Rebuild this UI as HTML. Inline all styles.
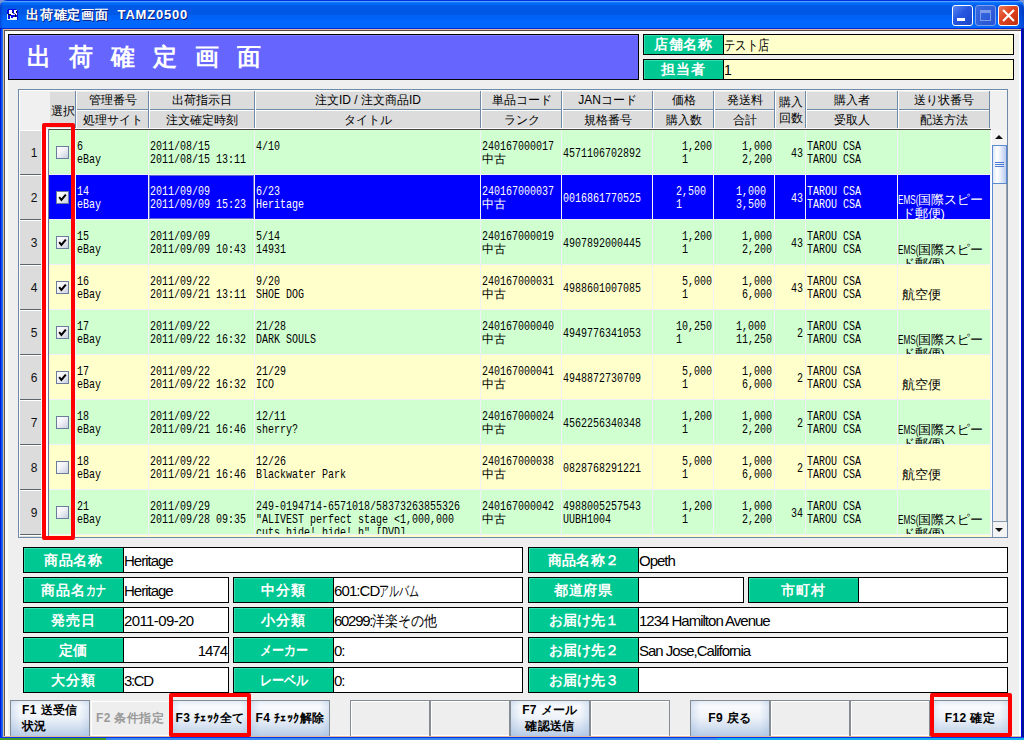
<!DOCTYPE html>
<html lang="ja"><head><meta charset="utf-8"><title>出荷確定画面 TAMZ0500</title>
<style>
html,body{margin:0;padding:0}
body{width:1024px;height:740px;overflow:hidden;position:relative;background:#efefef;font-family:"Liberation Sans",sans-serif;font-size:12px;color:#000}
div,span{box-sizing:border-box}
.a{position:absolute}
#tb{left:0;top:0;width:1024px;height:29px;border-radius:7px 7px 0 0;background:linear-gradient(to bottom,#0030e0 0,#0030e0 1px,#4aa0ff 1px,#4aa0ff 2px,#1478ff 2px,#1478ff 3px,#0068f8 3px,#0068f8 5px,#0059e6 5px,#0059e6 15px,#0060f4 15px,#0064fa 20px,#0068ff 21px,#0068ff 28px,#0028d8 28px)}
#tt{left:26px;top:7px;height:16px;line-height:16px;font-size:13px;font-weight:bold;color:#fff;letter-spacing:.8px;white-space:pre;text-shadow:1px 1px 0 #0a1a7a}
.wb{top:5px;width:21px;height:21px;border:1px solid #fff;border-radius:3px}
.m{position:absolute;font-family:"Liberation Mono",monospace;font-size:13px;line-height:13px;height:13px;white-space:pre;transform:scaleX(.7692);transform-origin:0 0}
.j{position:absolute;font-size:12px;line-height:13px;white-space:pre}
.h{position:absolute;font-size:12px;line-height:13px;text-align:center;white-space:nowrap;background:#dcdcdc}
.hv{position:absolute;width:1px;background:#6f8aa6;border:0}
.hw{position:absolute;width:1px;background:#fff}
.row{position:absolute;left:49px;width:941px;height:44px}
.rh{position:absolute;left:20px;width:21px;height:45px;background:#dcdcdc;border-top:1px solid #fff;border-bottom:1px solid #5c646c;text-align:center;line-height:44px;font-size:12px;padding-left:7px;color:#111}
.cb{position:absolute;left:56px;width:13px;height:13px;border:1px solid #6b7c9c;background:linear-gradient(135deg,#fff 0,#f4f4f8 40%,#c8cfdf 100%)}
.fld{position:absolute;height:26px;border:1px solid #000;background:#fff}
.lbl{position:absolute;left:0;top:0;height:24px;background:#00c892;border-right:1px solid #000;color:#fff;font-weight:bold;font-size:14px;letter-spacing:.8px;line-height:24px;text-align:center;white-space:nowrap;box-shadow:inset 1px 1px 0 #30e0b0}
.val{position:absolute;top:0;height:24px;line-height:25px;font-size:15px;white-space:pre;letter-spacing:-.6px}
.btn{position:absolute;top:700px;width:80px;height:36px;border:1px solid #868c94;border-bottom:0;font-weight:bold;font-size:12px;letter-spacing:.4px;line-height:16px;white-space:nowrap}
.on{background:linear-gradient(to right,rgba(150,182,222,.3) 0,rgba(150,182,222,0) 12%,rgba(150,182,222,0) 88%,rgba(150,182,222,.3) 100%),linear-gradient(to bottom,#e6edf6 0,#f8fafd 16%,#f0f4fa 45%,#d4e0f0 75%,#b8cce6 100%)}
.off{background:#eeeeee;box-shadow:inset 1px 1px 0 #fff,inset 0 -1px 0 #fff;color:#9a9a9a}
.red{position:absolute;border:4px solid #fe0000;border-radius:2px}
</style></head><body>

<div class="a" style="left:0;top:0;width:1024px;height:8px;background:#7b93d2"></div>
<div class="a" id="tb"></div>
<svg class="a" style="left:7px;top:9px" width="11" height="11" viewBox="0 0 11 11" shape-rendering="crispEdges"><rect x="0" y="0" width="11" height="11" fill="#0808e0"/><rect x="0" y="0" width="1" height="1" fill="#0a5ae8"/><rect x="9" y="0" width="2" height="1" fill="#0a5ae8"/><rect x="2" y="1" width="3" height="5" fill="#fff"/><rect x="7" y="1" width="3" height="4" fill="#fff"/><rect x="5" y="4" width="5" height="2" fill="#f4f4ff"/><rect x="5" y="3" width="1" height="1" fill="#111"/><rect x="9" y="2" width="1" height="2" fill="#111"/><rect x="1" y="5" width="3" height="1" fill="#111"/><rect x="8" y="5" width="1" height="3" fill="#111"/><rect x="6" y="4" width="2" height="1" fill="#4040e8"/><rect x="0" y="5" width="1" height="6" fill="#c8f4f4"/><rect x="3" y="7" width="1" height="3" fill="#f0fff8"/><rect x="6" y="8" width="4" height="2" fill="#f4fff4"/><rect x="1" y="10" width="9" height="1" fill="#d8fcf4"/><rect x="4" y="9" width="2" height="1" fill="#e8fff4"/></svg>
<div class="a" style="left:1016px;top:3px;width:8px;height:26px;background:linear-gradient(to right,rgba(0,20,150,0) 0,rgba(0,20,150,.45) 100%);border-radius:0 7px 0 0"></div>
<div class="a" style="left:0;top:3px;width:3px;height:26px;background:linear-gradient(to right,rgba(0,20,170,.4) 0,rgba(0,20,170,0) 100%)"></div>
<div class="a" id="tt">出荷確定画面  TAMZ0500</div>
<div class="a wb" style="left:952px;background:linear-gradient(135deg,#5a86f0 0,#2656e0 45%,#1c44c8 100%)"><div class="a" style="left:4px;top:12px;width:8px;height:3px;background:#fff"></div></div>
<div class="a wb" style="left:975px;border-color:#7f9fe8;background:linear-gradient(135deg,#3a6ae0 0,#2454d4 100%)"><div class="a" style="left:4px;top:4px;width:11px;height:11px;border:1px solid #7f9cea;border-top-width:3px"></div></div>
<div class="a wb" style="left:998px;background:linear-gradient(135deg,#ec7a58 0,#e04824 40%,#c22c0c 100%)"><svg class="a" style="left:3px;top:3px" width="13" height="13" viewBox="0 0 13 13"><path d="M1.8 1.8 L11.2 11.2 M11.2 1.8 L1.8 11.2" stroke="#fff" stroke-width="2.1" stroke-linecap="square"/></svg></div>
<div class="a" style="left:0;top:29px;width:1px;height:711px;background:#0019d8"></div><div class="a" style="left:1px;top:29px;width:1px;height:711px;background:#0a50f0"></div><div class="a" style="left:2px;top:29px;width:1px;height:711px;background:#1c6cf8"></div>
<div class="a" style="left:3px;top:29px;width:1px;height:707px;background:#dcb898"></div>
<div class="a" style="left:4px;top:30px;width:1px;height:706px;background:#5a5454"></div>
<div class="a" style="left:3px;top:29px;width:1018px;height:1px;background:#dcb898"></div>
<div class="a" style="left:4px;top:30px;width:1017px;height:1px;background:#504a4a"></div>
<div class="a" style="left:5px;top:31px;width:1016px;height:3px;background:#fbfaf9"></div>
<div class="a" style="left:5px;top:31px;width:3px;height:705px;background:#fbfaf9"></div>
<div class="a" style="left:1019px;top:31px;width:2px;height:705px;background:#fff"></div>
<div class="a" style="left:1021px;top:29px;width:1px;height:711px;background:#0000e8"></div><div class="a" style="left:1022px;top:29px;width:2px;height:711px;background:#001296"></div>
<div class="a" style="left:5px;top:735px;width:1016px;height:1px;background:#fbfaf9"></div>
<div class="a" style="left:3px;top:736px;width:1018px;height:1px;background:#dcb898"></div>
<div class="a" style="left:0;top:737px;width:1024px;height:1px;background:#0a34ec"></div>
<div class="a" style="left:0;top:738px;width:106px;height:2px;background:#3e9a2a"></div>
<div class="a" style="left:106px;top:738px;width:611px;height:2px;background:#3a8af0"></div>
<div class="a" style="left:717px;top:738px;width:307px;height:2px;background:#14b0ee"></div>
<div class="a" style="left:8px;top:34px;width:631px;height:46px;border:1px solid #000;background:#6666fe;box-shadow:inset 0 1px 0 #8080ff"></div>
<div class="a" style="left:27px;top:42px;height:30px;line-height:30px;font-size:24px;font-weight:bold;color:#fff;letter-spacing:18px;white-space:nowrap">出荷確定画面</div>
<div class="a" style="left:643px;top:34px;width:371px;height:21px;border:1px solid #000;background:#ffffcc"><div class="lbl" style="width:80px;height:19px;line-height:19px">店舗名称</div><div class="val" style="left:80px;height:19px;line-height:20px;font-size:14px;letter-spacing:0"><span style="display:inline-block;letter-spacing:0;transform:scaleX(0.804);transform-origin:0 50%;margin-right:-11.0px">テスト店</span></div></div>
<div class="a" style="left:643px;top:59px;width:371px;height:21px;border:1px solid #000;background:#ffffcc"><div class="lbl" style="width:80px;height:19px;line-height:19px">担当者</div><div class="val" style="left:80px;height:19px;line-height:20px;font-size:14px;letter-spacing:0">1</div></div>
<div class="a" style="left:18px;top:89px;width:990px;height:449px;border:1px solid #6f8aa6;background:#f0f0f0;box-shadow:inset 1px 1px 0 #fff"></div>
<div class="h" style="left:50px;top:92px;width:25px;height:36px;line-height:33px;padding-top:3px;letter-spacing:-.5px">選択</div>
<div class="h" style="left:77px;top:92px;width:71px;height:17px;line-height:17px">管理番号</div>
<div class="h" style="left:77px;top:111px;width:71px;height:17px;line-height:19px;overflow:hidden">処理サイト</div>
<div class="a" style="left:76px;top:109px;width:72px;height:1px;background:#6f8aa6"></div><div class="a" style="left:77px;top:110px;width:71px;height:1px;background:#fff"></div>
<div class="h" style="left:150px;top:92px;width:104px;height:17px;line-height:17px">出荷指示日</div>
<div class="h" style="left:150px;top:111px;width:104px;height:17px;line-height:19px;overflow:hidden">注文確定時刻</div>
<div class="a" style="left:149px;top:109px;width:105px;height:1px;background:#6f8aa6"></div><div class="a" style="left:150px;top:110px;width:104px;height:1px;background:#fff"></div>
<div class="h" style="left:256px;top:92px;width:224px;height:17px;line-height:17px">注文ID / 注文商品ID</div>
<div class="h" style="left:256px;top:111px;width:224px;height:17px;line-height:19px;overflow:hidden">タイトル</div>
<div class="a" style="left:255px;top:109px;width:225px;height:1px;background:#6f8aa6"></div><div class="a" style="left:256px;top:110px;width:224px;height:1px;background:#fff"></div>
<div class="h" style="left:482px;top:92px;width:79px;height:17px;line-height:17px">単品コード</div>
<div class="h" style="left:482px;top:111px;width:79px;height:17px;line-height:19px;overflow:hidden">ランク</div>
<div class="a" style="left:481px;top:109px;width:80px;height:1px;background:#6f8aa6"></div><div class="a" style="left:482px;top:110px;width:79px;height:1px;background:#fff"></div>
<div class="h" style="left:563px;top:92px;width:89px;height:17px;line-height:17px">JANコード</div>
<div class="h" style="left:563px;top:111px;width:89px;height:17px;line-height:19px;overflow:hidden">規格番号</div>
<div class="a" style="left:562px;top:109px;width:90px;height:1px;background:#6f8aa6"></div><div class="a" style="left:563px;top:110px;width:89px;height:1px;background:#fff"></div>
<div class="h" style="left:654px;top:92px;width:59px;height:17px;line-height:17px">価格</div>
<div class="h" style="left:654px;top:111px;width:59px;height:17px;line-height:19px;overflow:hidden">購入数</div>
<div class="a" style="left:653px;top:109px;width:60px;height:1px;background:#6f8aa6"></div><div class="a" style="left:654px;top:110px;width:59px;height:1px;background:#fff"></div>
<div class="h" style="left:715px;top:92px;width:59px;height:17px;line-height:17px">発送料</div>
<div class="h" style="left:715px;top:111px;width:59px;height:17px;line-height:19px;overflow:hidden">合計</div>
<div class="a" style="left:714px;top:109px;width:60px;height:1px;background:#6f8aa6"></div><div class="a" style="left:715px;top:110px;width:59px;height:1px;background:#fff"></div>
<div class="h" style="left:806px;top:92px;width:91px;height:17px;line-height:17px">購入者</div>
<div class="h" style="left:806px;top:111px;width:91px;height:17px;line-height:19px;overflow:hidden">受取人</div>
<div class="a" style="left:805px;top:109px;width:92px;height:1px;background:#6f8aa6"></div><div class="a" style="left:806px;top:110px;width:91px;height:1px;background:#fff"></div>
<div class="h" style="left:899px;top:92px;width:90px;height:17px;line-height:17px">送り状番号</div>
<div class="h" style="left:899px;top:111px;width:90px;height:17px;line-height:19px;overflow:hidden">配送方法</div>
<div class="a" style="left:898px;top:109px;width:91px;height:1px;background:#6f8aa6"></div><div class="a" style="left:899px;top:110px;width:90px;height:1px;background:#fff"></div>
<div class="h" style="left:776px;top:92px;width:29px;height:36px;line-height:16px;padding-top:2px;white-space:normal">購入<br>回数</div>
<div class="hv" style="left:75px;top:91px;height:38px"></div>
<div class="hw" style="left:76px;top:91px;height:37px"></div>
<div class="hv" style="left:148px;top:91px;height:38px"></div>
<div class="hw" style="left:149px;top:91px;height:37px"></div>
<div class="hv" style="left:254px;top:91px;height:38px"></div>
<div class="hw" style="left:255px;top:91px;height:37px"></div>
<div class="hv" style="left:480px;top:91px;height:38px"></div>
<div class="hw" style="left:481px;top:91px;height:37px"></div>
<div class="hv" style="left:561px;top:91px;height:38px"></div>
<div class="hw" style="left:562px;top:91px;height:37px"></div>
<div class="hv" style="left:652px;top:91px;height:38px"></div>
<div class="hw" style="left:653px;top:91px;height:37px"></div>
<div class="hv" style="left:713px;top:91px;height:38px"></div>
<div class="hw" style="left:714px;top:91px;height:37px"></div>
<div class="hv" style="left:774px;top:91px;height:38px"></div>
<div class="hw" style="left:775px;top:91px;height:37px"></div>
<div class="hv" style="left:805px;top:91px;height:38px"></div>
<div class="hw" style="left:806px;top:91px;height:37px"></div>
<div class="hv" style="left:897px;top:91px;height:38px"></div>
<div class="hw" style="left:898px;top:91px;height:37px"></div>
<div class="hv" style="left:989px;top:91px;height:38px"></div>
<div class="a" style="left:51px;top:128px;width:939px;height:1px;background:#fafafa"></div>
<div class="a" style="left:48px;top:129px;width:943px;height:1px;background:#4a4444"></div>
<div class="a" style="left:48px;top:129px;width:1px;height:408px;background:#6a78a0"></div>
<div class="a" style="left:46px;top:130px;width:2px;height:407px;background:#fff"></div>
<div class="a" style="left:41px;top:130px;width:1px;height:407px;background:#e8fcfc"></div>
<div class="a" style="left:49px;top:130px;width:942px;height:407px;background:#f1f2f7"></div>
<div class="rh" style="top:130px">1</div>
<div class="a" style="left:49px;top:130px;width:26px;height:44px;background:#d0ffd0"></div>
<div class="a" style="left:76px;top:130px;width:72px;height:44px;background:#d0ffd0"></div>
<div class="a" style="left:149px;top:130px;width:105px;height:44px;background:#d0ffd0"></div>
<div class="a" style="left:255px;top:130px;width:225px;height:44px;background:#d0ffd0"></div>
<div class="a" style="left:481px;top:130px;width:80px;height:44px;background:#d0ffd0"></div>
<div class="a" style="left:562px;top:130px;width:90px;height:44px;background:#d0ffd0"></div>
<div class="a" style="left:653px;top:130px;width:60px;height:44px;background:#d0ffd0"></div>
<div class="a" style="left:714px;top:130px;width:60px;height:44px;background:#d0ffd0"></div>
<div class="a" style="left:775px;top:130px;width:30px;height:44px;background:#d0ffd0"></div>
<div class="a" style="left:806px;top:130px;width:91px;height:44px;background:#d0ffd0"></div>
<div class="a" style="left:898px;top:130px;width:92px;height:44px;background:#d0ffd0"></div>
<div class="cb" style="top:146px"></div>
<div class="m" style="left:77px;top:140px;color:#000">6</div>
<div class="m" style="left:77px;top:153px;color:#000">eBay</div>
<div class="m" style="left:150px;top:140px;color:#000">2011/08/15</div>
<div class="m" style="left:150px;top:153px;color:#000">2011/08/15 13:11</div>
<div class="m" style="left:256px;top:140px;color:#000">4/10</div>
<div class="m" style="left:482px;top:140px;color:#000">240167000017</div>
<div class="j" style="left:482px;top:153px;color:#000">中古</div>
<div class="m" style="left:563px;top:147px;color:#000">4571106702892</div>
<div class="m" style="left:682px;top:140px;color:#000">1,200</div>
<div class="m" style="left:682px;top:153px;color:#000">1</div>
<div class="m" style="left:742px;top:140px;color:#000">1,000</div>
<div class="m" style="left:742px;top:153px;color:#000">2,200</div>
<div class="m" style="left:791px;top:147px;color:#000">43</div>
<div class="m" style="left:807px;top:140px;color:#000">TAROU CSA</div>
<div class="m" style="left:807px;top:153px;color:#000">TAROU CSA</div>
<div class="rh" style="top:175px">2</div>
<div class="a" style="left:49px;top:175px;width:26px;height:44px;background:#0000fe"></div>
<div class="a" style="left:76px;top:175px;width:72px;height:44px;background:#0000fe"></div>
<div class="a" style="left:149px;top:175px;width:105px;height:44px;background:#0000fe"></div>
<div class="a" style="left:255px;top:175px;width:225px;height:44px;background:#0000fe"></div>
<div class="a" style="left:481px;top:175px;width:80px;height:44px;background:#0000fe"></div>
<div class="a" style="left:562px;top:175px;width:90px;height:44px;background:#0000fe"></div>
<div class="a" style="left:653px;top:175px;width:60px;height:44px;background:#0000fe"></div>
<div class="a" style="left:714px;top:175px;width:60px;height:44px;background:#0000fe"></div>
<div class="a" style="left:775px;top:175px;width:30px;height:44px;background:#0000fe"></div>
<div class="a" style="left:806px;top:175px;width:91px;height:44px;background:#0000fe"></div>
<div class="a" style="left:898px;top:175px;width:92px;height:44px;background:#0000fe"></div>
<div class="cb" style="top:191px"><svg class="a" style="left:1px;top:1px" width="9" height="9" viewBox="0 0 9 9"><path d="M1.2 4.2 L3.4 7 L7.8 1.6" stroke="#000" stroke-width="2" fill="none"/></svg></div>
<div class="m" style="left:77px;top:185px;color:#fff">14</div>
<div class="m" style="left:77px;top:198px;color:#fff">eBay</div>
<div class="m" style="left:150px;top:185px;color:#fff">2011/09/09</div>
<div class="m" style="left:150px;top:198px;color:#fff">2011/09/09 15:23</div>
<div class="m" style="left:256px;top:185px;color:#fff">6/23</div>
<div class="m" style="left:256px;top:198px;color:#fff">Heritage</div>
<div class="m" style="left:482px;top:185px;color:#fff">240167000037</div>
<div class="j" style="left:482px;top:198px;color:#fff">中古</div>
<div class="m" style="left:563px;top:192px;color:#fff">0016861770525</div>
<div class="m" style="left:676px;top:185px;color:#fff">2,500</div>
<div class="m" style="left:676px;top:198px;color:#fff">1</div>
<div class="m" style="left:736px;top:185px;color:#fff">1,000</div>
<div class="m" style="left:736px;top:198px;color:#fff">3,500</div>
<div class="m" style="left:791px;top:192px;color:#fff">43</div>
<div class="m" style="left:807px;top:185px;color:#fff">TAROU CSA</div>
<div class="m" style="left:807px;top:198px;color:#fff">TAROU CSA</div>
<div class="a" style="left:898px;top:193px;width:92px;height:26px;overflow:hidden"><div class="j" style="left:0;top:0;font-size:13px;color:#fff"><span style="display:inline-block;font-size:12px;transform:scaleX(.68);transform-origin:0 50%;margin-right:-9.6px">EMS(</span>国際スピー<br>&nbsp;ド郵便)</div></div>
<div class="rh" style="top:220px">3</div>
<div class="a" style="left:49px;top:220px;width:26px;height:44px;background:#d0ffd0"></div>
<div class="a" style="left:76px;top:220px;width:72px;height:44px;background:#d0ffd0"></div>
<div class="a" style="left:149px;top:220px;width:105px;height:44px;background:#d0ffd0"></div>
<div class="a" style="left:255px;top:220px;width:225px;height:44px;background:#d0ffd0"></div>
<div class="a" style="left:481px;top:220px;width:80px;height:44px;background:#d0ffd0"></div>
<div class="a" style="left:562px;top:220px;width:90px;height:44px;background:#d0ffd0"></div>
<div class="a" style="left:653px;top:220px;width:60px;height:44px;background:#d0ffd0"></div>
<div class="a" style="left:714px;top:220px;width:60px;height:44px;background:#d0ffd0"></div>
<div class="a" style="left:775px;top:220px;width:30px;height:44px;background:#d0ffd0"></div>
<div class="a" style="left:806px;top:220px;width:91px;height:44px;background:#d0ffd0"></div>
<div class="a" style="left:898px;top:220px;width:92px;height:44px;background:#d0ffd0"></div>
<div class="cb" style="top:236px"><svg class="a" style="left:1px;top:1px" width="9" height="9" viewBox="0 0 9 9"><path d="M1.2 4.2 L3.4 7 L7.8 1.6" stroke="#000" stroke-width="2" fill="none"/></svg></div>
<div class="m" style="left:77px;top:230px;color:#000">15</div>
<div class="m" style="left:77px;top:243px;color:#000">eBay</div>
<div class="m" style="left:150px;top:230px;color:#000">2011/09/09</div>
<div class="m" style="left:150px;top:243px;color:#000">2011/09/09 10:43</div>
<div class="m" style="left:256px;top:230px;color:#000">5/14</div>
<div class="m" style="left:256px;top:243px;color:#000">14931</div>
<div class="m" style="left:482px;top:230px;color:#000">240167000019</div>
<div class="j" style="left:482px;top:243px;color:#000">中古</div>
<div class="m" style="left:563px;top:237px;color:#000">4907892000445</div>
<div class="m" style="left:682px;top:230px;color:#000">1,200</div>
<div class="m" style="left:682px;top:243px;color:#000">1</div>
<div class="m" style="left:742px;top:230px;color:#000">1,000</div>
<div class="m" style="left:742px;top:243px;color:#000">2,200</div>
<div class="m" style="left:791px;top:237px;color:#000">43</div>
<div class="m" style="left:807px;top:230px;color:#000">TAROU CSA</div>
<div class="m" style="left:807px;top:243px;color:#000">TAROU CSA</div>
<div class="a" style="left:898px;top:243px;width:92px;height:21px;overflow:hidden"><div class="j" style="left:0;top:0;font-size:13px;color:#000"><span style="display:inline-block;font-size:12px;transform:scaleX(.68);transform-origin:0 50%;margin-right:-9.6px">EMS(</span>国際スピー<br>&nbsp;ド郵便)</div></div>
<div class="rh" style="top:265px">4</div>
<div class="a" style="left:49px;top:265px;width:26px;height:44px;background:#ffffcc"></div>
<div class="a" style="left:76px;top:265px;width:72px;height:44px;background:#ffffcc"></div>
<div class="a" style="left:149px;top:265px;width:105px;height:44px;background:#ffffcc"></div>
<div class="a" style="left:255px;top:265px;width:225px;height:44px;background:#ffffcc"></div>
<div class="a" style="left:481px;top:265px;width:80px;height:44px;background:#ffffcc"></div>
<div class="a" style="left:562px;top:265px;width:90px;height:44px;background:#ffffcc"></div>
<div class="a" style="left:653px;top:265px;width:60px;height:44px;background:#ffffcc"></div>
<div class="a" style="left:714px;top:265px;width:60px;height:44px;background:#ffffcc"></div>
<div class="a" style="left:775px;top:265px;width:30px;height:44px;background:#ffffcc"></div>
<div class="a" style="left:806px;top:265px;width:91px;height:44px;background:#ffffcc"></div>
<div class="a" style="left:898px;top:265px;width:92px;height:44px;background:#ffffcc"></div>
<div class="cb" style="top:281px"><svg class="a" style="left:1px;top:1px" width="9" height="9" viewBox="0 0 9 9"><path d="M1.2 4.2 L3.4 7 L7.8 1.6" stroke="#000" stroke-width="2" fill="none"/></svg></div>
<div class="m" style="left:77px;top:275px;color:#000">16</div>
<div class="m" style="left:77px;top:288px;color:#000">eBay</div>
<div class="m" style="left:150px;top:275px;color:#000">2011/09/22</div>
<div class="m" style="left:150px;top:288px;color:#000">2011/09/21 13:11</div>
<div class="m" style="left:256px;top:275px;color:#000">9/20</div>
<div class="m" style="left:256px;top:288px;color:#000">SHOE DOG</div>
<div class="m" style="left:482px;top:275px;color:#000">240167000031</div>
<div class="j" style="left:482px;top:288px;color:#000">中古</div>
<div class="m" style="left:563px;top:282px;color:#000">4988601007085</div>
<div class="m" style="left:682px;top:275px;color:#000">5,000</div>
<div class="m" style="left:682px;top:288px;color:#000">1</div>
<div class="m" style="left:742px;top:275px;color:#000">1,000</div>
<div class="m" style="left:742px;top:288px;color:#000">6,000</div>
<div class="m" style="left:791px;top:282px;color:#000">43</div>
<div class="m" style="left:807px;top:275px;color:#000">TAROU CSA</div>
<div class="m" style="left:807px;top:288px;color:#000">TAROU CSA</div>
<div class="j" style="left:902px;top:288px;font-size:13px;color:#000">航空便</div>
<div class="rh" style="top:310px">5</div>
<div class="a" style="left:49px;top:310px;width:26px;height:44px;background:#d0ffd0"></div>
<div class="a" style="left:76px;top:310px;width:72px;height:44px;background:#d0ffd0"></div>
<div class="a" style="left:149px;top:310px;width:105px;height:44px;background:#d0ffd0"></div>
<div class="a" style="left:255px;top:310px;width:225px;height:44px;background:#d0ffd0"></div>
<div class="a" style="left:481px;top:310px;width:80px;height:44px;background:#d0ffd0"></div>
<div class="a" style="left:562px;top:310px;width:90px;height:44px;background:#d0ffd0"></div>
<div class="a" style="left:653px;top:310px;width:60px;height:44px;background:#d0ffd0"></div>
<div class="a" style="left:714px;top:310px;width:60px;height:44px;background:#d0ffd0"></div>
<div class="a" style="left:775px;top:310px;width:30px;height:44px;background:#d0ffd0"></div>
<div class="a" style="left:806px;top:310px;width:91px;height:44px;background:#d0ffd0"></div>
<div class="a" style="left:898px;top:310px;width:92px;height:44px;background:#d0ffd0"></div>
<div class="cb" style="top:326px"><svg class="a" style="left:1px;top:1px" width="9" height="9" viewBox="0 0 9 9"><path d="M1.2 4.2 L3.4 7 L7.8 1.6" stroke="#000" stroke-width="2" fill="none"/></svg></div>
<div class="m" style="left:77px;top:320px;color:#000">17</div>
<div class="m" style="left:77px;top:333px;color:#000">eBay</div>
<div class="m" style="left:150px;top:320px;color:#000">2011/09/22</div>
<div class="m" style="left:150px;top:333px;color:#000">2011/09/22 16:32</div>
<div class="m" style="left:256px;top:320px;color:#000">21/28</div>
<div class="m" style="left:256px;top:333px;color:#000">DARK SOULS</div>
<div class="m" style="left:482px;top:320px;color:#000">240167000040</div>
<div class="j" style="left:482px;top:333px;color:#000">中古</div>
<div class="m" style="left:563px;top:327px;color:#000">4949776341053</div>
<div class="m" style="left:676px;top:320px;color:#000">10,250</div>
<div class="m" style="left:676px;top:333px;color:#000">1</div>
<div class="m" style="left:736px;top:320px;color:#000">1,000</div>
<div class="m" style="left:736px;top:333px;color:#000">11,250</div>
<div class="m" style="left:797px;top:327px;color:#000">2</div>
<div class="m" style="left:807px;top:320px;color:#000">TAROU CSA</div>
<div class="m" style="left:807px;top:333px;color:#000">TAROU CSA</div>
<div class="a" style="left:898px;top:333px;width:92px;height:21px;overflow:hidden"><div class="j" style="left:0;top:0;font-size:13px;color:#000"><span style="display:inline-block;font-size:12px;transform:scaleX(.68);transform-origin:0 50%;margin-right:-9.6px">EMS(</span>国際スピー<br>&nbsp;ド郵便)</div></div>
<div class="rh" style="top:355px">6</div>
<div class="a" style="left:49px;top:355px;width:26px;height:44px;background:#ffffcc"></div>
<div class="a" style="left:76px;top:355px;width:72px;height:44px;background:#ffffcc"></div>
<div class="a" style="left:149px;top:355px;width:105px;height:44px;background:#ffffcc"></div>
<div class="a" style="left:255px;top:355px;width:225px;height:44px;background:#ffffcc"></div>
<div class="a" style="left:481px;top:355px;width:80px;height:44px;background:#ffffcc"></div>
<div class="a" style="left:562px;top:355px;width:90px;height:44px;background:#ffffcc"></div>
<div class="a" style="left:653px;top:355px;width:60px;height:44px;background:#ffffcc"></div>
<div class="a" style="left:714px;top:355px;width:60px;height:44px;background:#ffffcc"></div>
<div class="a" style="left:775px;top:355px;width:30px;height:44px;background:#ffffcc"></div>
<div class="a" style="left:806px;top:355px;width:91px;height:44px;background:#ffffcc"></div>
<div class="a" style="left:898px;top:355px;width:92px;height:44px;background:#ffffcc"></div>
<div class="cb" style="top:371px"><svg class="a" style="left:1px;top:1px" width="9" height="9" viewBox="0 0 9 9"><path d="M1.2 4.2 L3.4 7 L7.8 1.6" stroke="#000" stroke-width="2" fill="none"/></svg></div>
<div class="m" style="left:77px;top:365px;color:#000">17</div>
<div class="m" style="left:77px;top:378px;color:#000">eBay</div>
<div class="m" style="left:150px;top:365px;color:#000">2011/09/22</div>
<div class="m" style="left:150px;top:378px;color:#000">2011/09/22 16:32</div>
<div class="m" style="left:256px;top:365px;color:#000">21/29</div>
<div class="m" style="left:256px;top:378px;color:#000">ICO</div>
<div class="m" style="left:482px;top:365px;color:#000">240167000041</div>
<div class="j" style="left:482px;top:378px;color:#000">中古</div>
<div class="m" style="left:563px;top:372px;color:#000">4948872730709</div>
<div class="m" style="left:682px;top:365px;color:#000">5,000</div>
<div class="m" style="left:682px;top:378px;color:#000">1</div>
<div class="m" style="left:742px;top:365px;color:#000">1,000</div>
<div class="m" style="left:742px;top:378px;color:#000">6,000</div>
<div class="m" style="left:797px;top:372px;color:#000">2</div>
<div class="m" style="left:807px;top:365px;color:#000">TAROU CSA</div>
<div class="m" style="left:807px;top:378px;color:#000">TAROU CSA</div>
<div class="j" style="left:902px;top:378px;font-size:13px;color:#000">航空便</div>
<div class="rh" style="top:400px">7</div>
<div class="a" style="left:49px;top:400px;width:26px;height:44px;background:#d0ffd0"></div>
<div class="a" style="left:76px;top:400px;width:72px;height:44px;background:#d0ffd0"></div>
<div class="a" style="left:149px;top:400px;width:105px;height:44px;background:#d0ffd0"></div>
<div class="a" style="left:255px;top:400px;width:225px;height:44px;background:#d0ffd0"></div>
<div class="a" style="left:481px;top:400px;width:80px;height:44px;background:#d0ffd0"></div>
<div class="a" style="left:562px;top:400px;width:90px;height:44px;background:#d0ffd0"></div>
<div class="a" style="left:653px;top:400px;width:60px;height:44px;background:#d0ffd0"></div>
<div class="a" style="left:714px;top:400px;width:60px;height:44px;background:#d0ffd0"></div>
<div class="a" style="left:775px;top:400px;width:30px;height:44px;background:#d0ffd0"></div>
<div class="a" style="left:806px;top:400px;width:91px;height:44px;background:#d0ffd0"></div>
<div class="a" style="left:898px;top:400px;width:92px;height:44px;background:#d0ffd0"></div>
<div class="cb" style="top:416px"></div>
<div class="m" style="left:77px;top:410px;color:#000">18</div>
<div class="m" style="left:77px;top:423px;color:#000">eBay</div>
<div class="m" style="left:150px;top:410px;color:#000">2011/09/22</div>
<div class="m" style="left:150px;top:423px;color:#000">2011/09/21 16:46</div>
<div class="m" style="left:256px;top:410px;color:#000">12/11</div>
<div class="m" style="left:256px;top:423px;color:#000">sherry?</div>
<div class="m" style="left:482px;top:410px;color:#000">240167000024</div>
<div class="j" style="left:482px;top:423px;color:#000">中古</div>
<div class="m" style="left:563px;top:417px;color:#000">4562256340348</div>
<div class="m" style="left:682px;top:410px;color:#000">1,200</div>
<div class="m" style="left:682px;top:423px;color:#000">1</div>
<div class="m" style="left:742px;top:410px;color:#000">1,000</div>
<div class="m" style="left:742px;top:423px;color:#000">2,200</div>
<div class="m" style="left:797px;top:417px;color:#000">2</div>
<div class="m" style="left:807px;top:410px;color:#000">TAROU CSA</div>
<div class="m" style="left:807px;top:423px;color:#000">TAROU CSA</div>
<div class="a" style="left:898px;top:423px;width:92px;height:21px;overflow:hidden"><div class="j" style="left:0;top:0;font-size:13px;color:#000"><span style="display:inline-block;font-size:12px;transform:scaleX(.68);transform-origin:0 50%;margin-right:-9.6px">EMS(</span>国際スピー<br>&nbsp;ド郵便)</div></div>
<div class="rh" style="top:445px">8</div>
<div class="a" style="left:49px;top:445px;width:26px;height:44px;background:#ffffcc"></div>
<div class="a" style="left:76px;top:445px;width:72px;height:44px;background:#ffffcc"></div>
<div class="a" style="left:149px;top:445px;width:105px;height:44px;background:#ffffcc"></div>
<div class="a" style="left:255px;top:445px;width:225px;height:44px;background:#ffffcc"></div>
<div class="a" style="left:481px;top:445px;width:80px;height:44px;background:#ffffcc"></div>
<div class="a" style="left:562px;top:445px;width:90px;height:44px;background:#ffffcc"></div>
<div class="a" style="left:653px;top:445px;width:60px;height:44px;background:#ffffcc"></div>
<div class="a" style="left:714px;top:445px;width:60px;height:44px;background:#ffffcc"></div>
<div class="a" style="left:775px;top:445px;width:30px;height:44px;background:#ffffcc"></div>
<div class="a" style="left:806px;top:445px;width:91px;height:44px;background:#ffffcc"></div>
<div class="a" style="left:898px;top:445px;width:92px;height:44px;background:#ffffcc"></div>
<div class="cb" style="top:461px"></div>
<div class="m" style="left:77px;top:455px;color:#000">18</div>
<div class="m" style="left:77px;top:468px;color:#000">eBay</div>
<div class="m" style="left:150px;top:455px;color:#000">2011/09/22</div>
<div class="m" style="left:150px;top:468px;color:#000">2011/09/21 16:46</div>
<div class="m" style="left:256px;top:455px;color:#000">12/26</div>
<div class="m" style="left:256px;top:468px;color:#000">Blackwater Park</div>
<div class="m" style="left:482px;top:455px;color:#000">240167000038</div>
<div class="j" style="left:482px;top:468px;color:#000">中古</div>
<div class="m" style="left:563px;top:462px;color:#000">0828768291221</div>
<div class="m" style="left:682px;top:455px;color:#000">5,000</div>
<div class="m" style="left:682px;top:468px;color:#000">1</div>
<div class="m" style="left:742px;top:455px;color:#000">1,000</div>
<div class="m" style="left:742px;top:468px;color:#000">6,000</div>
<div class="m" style="left:797px;top:462px;color:#000">2</div>
<div class="m" style="left:807px;top:455px;color:#000">TAROU CSA</div>
<div class="m" style="left:807px;top:468px;color:#000">TAROU CSA</div>
<div class="j" style="left:902px;top:468px;font-size:13px;color:#000">航空便</div>
<div class="rh" style="top:490px">9</div>
<div class="a" style="left:49px;top:490px;width:26px;height:44px;background:#d0ffd0"></div>
<div class="a" style="left:76px;top:490px;width:72px;height:44px;background:#d0ffd0"></div>
<div class="a" style="left:149px;top:490px;width:105px;height:44px;background:#d0ffd0"></div>
<div class="a" style="left:255px;top:490px;width:225px;height:44px;background:#d0ffd0"></div>
<div class="a" style="left:481px;top:490px;width:80px;height:44px;background:#d0ffd0"></div>
<div class="a" style="left:562px;top:490px;width:90px;height:44px;background:#d0ffd0"></div>
<div class="a" style="left:653px;top:490px;width:60px;height:44px;background:#d0ffd0"></div>
<div class="a" style="left:714px;top:490px;width:60px;height:44px;background:#d0ffd0"></div>
<div class="a" style="left:775px;top:490px;width:30px;height:44px;background:#d0ffd0"></div>
<div class="a" style="left:806px;top:490px;width:91px;height:44px;background:#d0ffd0"></div>
<div class="a" style="left:898px;top:490px;width:92px;height:44px;background:#d0ffd0"></div>
<div class="cb" style="top:506px"></div>
<div class="m" style="left:77px;top:500px;color:#000">21</div>
<div class="m" style="left:77px;top:513px;color:#000">eBay</div>
<div class="m" style="left:150px;top:500px;color:#000">2011/09/29</div>
<div class="m" style="left:150px;top:513px;color:#000">2011/09/28 09:35</div>
<div class="m" style="left:256px;top:500px;color:#000">249-0194714-6571018/58373263855326</div>
<div class="m" style="left:256px;top:513px;color:#000">&quot;ALIVEST perfect stage &lt;1,000,000</div>
<div class="a" style="left:255px;top:526px;width:225px;height:8px;overflow:hidden"><div class="m" style="left:1px;top:0;color:#000">cuts hide! hide! h&quot; [DVD]</div></div>
<div class="m" style="left:482px;top:500px;color:#000">240167000042</div>
<div class="j" style="left:482px;top:513px;color:#000">中古</div>
<div class="m" style="left:563px;top:500px;color:#000">4988005257543</div>
<div class="m" style="left:563px;top:513px;color:#000">UUBH1004</div>
<div class="m" style="left:682px;top:500px;color:#000">1,200</div>
<div class="m" style="left:682px;top:513px;color:#000">1</div>
<div class="m" style="left:742px;top:500px;color:#000">1,000</div>
<div class="m" style="left:742px;top:513px;color:#000">2,200</div>
<div class="m" style="left:791px;top:507px;color:#000">34</div>
<div class="m" style="left:807px;top:500px;color:#000">TAROU CSA</div>
<div class="m" style="left:807px;top:513px;color:#000">TAROU CSA</div>
<div class="a" style="left:898px;top:513px;width:92px;height:21px;overflow:hidden"><div class="j" style="left:0;top:0;font-size:13px;color:#000"><span style="display:inline-block;font-size:12px;transform:scaleX(.68);transform-origin:0 50%;margin-right:-9.6px">EMS(</span>国際スピー<br>&nbsp;ド郵便)</div></div>
<div class="a" style="left:49px;top:535px;width:26px;height:2px;background:#ffffcc"></div>
<div class="a" style="left:76px;top:535px;width:72px;height:2px;background:#ffffcc"></div>
<div class="a" style="left:149px;top:535px;width:105px;height:2px;background:#ffffcc"></div>
<div class="a" style="left:255px;top:535px;width:225px;height:2px;background:#ffffcc"></div>
<div class="a" style="left:481px;top:535px;width:80px;height:2px;background:#ffffcc"></div>
<div class="a" style="left:562px;top:535px;width:90px;height:2px;background:#ffffcc"></div>
<div class="a" style="left:653px;top:535px;width:60px;height:2px;background:#ffffcc"></div>
<div class="a" style="left:714px;top:535px;width:60px;height:2px;background:#ffffcc"></div>
<div class="a" style="left:775px;top:535px;width:30px;height:2px;background:#ffffcc"></div>
<div class="a" style="left:806px;top:535px;width:91px;height:2px;background:#ffffcc"></div>
<div class="a" style="left:898px;top:535px;width:92px;height:2px;background:#ffffcc"></div>
<div class="rh" style="top:535px;height:2px;border-bottom:0"></div>
<div class="a" style="left:149px;top:175px;width:105px;height:44px;border:1px solid #5a6ad2"></div>
<div class="a" style="left:991px;top:130px;width:1px;height:407px;background:#fff"></div>
<div class="a" style="left:992px;top:130px;width:15px;height:407px;background:#eeeeee;border-left:1px solid #5c8ad0;border-right:1px solid #a0a0a8"></div>
<div class="a" style="left:992px;top:130px;width:15px;height:15px;background:#f4f4f4"><svg class="a" style="left:3px;top:5px" width="8" height="4" viewBox="0 0 8 4"><path d="M0 4 L4 0 L8 4 Z" fill="#111"/></svg></div>
<div class="a" style="left:992px;top:145px;width:15px;height:39px;border:1px solid #5c8ad0;background:linear-gradient(to right,#dbe5f8 0,#ffffff 30%,#e6edfa 60%,#b9cbee 100%)"><div class="a" style="left:2px;top:16px;width:9px;height:1px;background:#4a78d4"></div><div class="a" style="left:2px;top:18px;width:9px;height:1px;background:#4a78d4"></div><div class="a" style="left:2px;top:20px;width:9px;height:1px;background:#4a78d4"></div></div>
<div class="a" style="left:992px;top:521px;width:15px;height:16px;background:#f4f4f4;border-top:1px solid #8898b0;border-left:1px solid #8898b0"><svg class="a" style="left:2px;top:6px" width="8" height="4" viewBox="0 0 8 4"><path d="M0 0 L8 0 L4 4 Z" fill="#111"/></svg></div>
<div class="fld" style="left:23px;top:547px;width:500px"><div class="lbl" style="width:100px">商品名称</div><div class="val" style="left:100px;letter-spacing:-1.0px">Heritage</div></div>
<div class="fld" style="left:23px;top:577px;width:206px"><div class="lbl" style="width:100px">商品名<span style="display:inline-block;letter-spacing:0;transform:scaleX(0.714);transform-origin:0 50%;margin-right:-8.0px">カナ</span></div><div class="val" style="left:100px;letter-spacing:-1.0px">Heritage</div></div>
<div class="fld" style="left:23px;top:607px;width:206px"><div class="lbl" style="width:100px">発売日</div><div class="val" style="left:100px;letter-spacing:-0.6px">2011-09-20</div></div>
<div class="fld" style="left:23px;top:637px;width:206px"><div class="lbl" style="width:100px">定価</div><div class="val" style="right:1px;text-align:right;letter-spacing:-1.0px">1474</div></div>
<div class="fld" style="left:23px;top:667px;width:206px"><div class="lbl" style="width:100px">大分類</div><div class="val" style="left:100px;letter-spacing:-1.4px">3:CD</div></div>
<div class="fld" style="left:233px;top:577px;width:290px"><div class="lbl" style="width:100px">中分類</div><div class="val" style="left:100px;letter-spacing:-0.9px">601:CD<span style="display:inline-block;letter-spacing:0;transform:scaleX(0.667);transform-origin:0 50%;margin-right:-20.0px">アルバム</span></div></div>
<div class="fld" style="left:233px;top:607px;width:290px"><div class="lbl" style="width:100px">小分類</div><div class="val" style="left:100px;letter-spacing:-1.3px">60299:<span style="display:inline-block;letter-spacing:0;transform:scaleX(0.867);transform-origin:0 50%;margin-right:-10.0px">洋楽その他</span></div></div>
<div class="fld" style="left:233px;top:637px;width:290px"><div class="lbl" style="width:100px"><span style="display:inline-block;letter-spacing:0;transform:scaleX(0.857);transform-origin:0 50%;margin-right:-8.0px">メーカー</span></div><div class="val" style="left:100px;letter-spacing:-1.0px">0:</div></div>
<div class="fld" style="left:233px;top:667px;width:290px"><div class="lbl" style="width:100px"><span style="display:inline-block;letter-spacing:0;transform:scaleX(0.857);transform-origin:0 50%;margin-right:-8.0px">レーベル</span></div><div class="val" style="left:100px;letter-spacing:-1.0px">0:</div></div>
<div class="fld" style="left:528px;top:547px;width:480px"><div class="lbl" style="width:110px;letter-spacing:0.4px">商品名称２</div><div class="val" style="left:110px;letter-spacing:-1.0px">Opeth</div></div>
<div class="fld" style="left:528px;top:577px;width:216px"><div class="lbl" style="width:110px">都道府県</div></div>
<div class="fld" style="left:748px;top:577px;width:260px"><div class="lbl" style="width:110px">市町村</div></div>
<div class="fld" style="left:528px;top:607px;width:480px"><div class="lbl" style="width:110px;letter-spacing:0px">お届け先１</div><div class="val" style="left:110px;letter-spacing:-1.0px">1234 Hamilton Avenue</div></div>
<div class="fld" style="left:528px;top:637px;width:480px"><div class="lbl" style="width:110px;letter-spacing:0px">お届け先２</div><div class="val" style="left:110px;letter-spacing:-1.0px">San Jose,California</div></div>
<div class="fld" style="left:528px;top:667px;width:480px"><div class="lbl" style="width:110px;letter-spacing:0px">お届け先３</div></div>
<div class="btn on" style="left:10px;padding:1px 0 0 11px;text-align:left">F1 送受信<br>状況</div>
<div class="btn off" style="left:90px;line-height:34px;text-align:center;border-color:#eeeeee">F2 条件指定</div>
<div class="btn on" style="left:170px;line-height:34px;text-align:center">F3 ﾁｪｯｸ全て</div>
<div class="btn on" style="left:250px;line-height:34px;text-align:center">F4 ﾁｪｯｸ解除</div>
<div class="btn off" style="left:350px;line-height:34px;text-align:center"></div>
<div class="btn off" style="left:430px;line-height:34px;text-align:center"></div>
<div class="btn on" style="left:510px;padding-top:1px;text-align:center">F7 メール<br>確認送信</div>
<div class="btn off" style="left:590px;line-height:34px;text-align:center"></div>
<div class="btn on" style="left:690px;line-height:34px;text-align:center">F9 戻る</div>
<div class="btn off" style="left:770px;line-height:34px;text-align:center"></div>
<div class="btn off" style="left:850px;line-height:34px;text-align:center"></div>
<div class="btn on" style="left:930px;line-height:34px;text-align:center">F12 確定</div>
<div class="red" style="left:42px;top:123px;width:33px;height:417px"></div>
<div class="red" style="left:169px;top:693px;width:82px;height:44px"></div>
<div class="red" style="left:930px;top:693px;width:82px;height:44px"></div>
</body></html>
